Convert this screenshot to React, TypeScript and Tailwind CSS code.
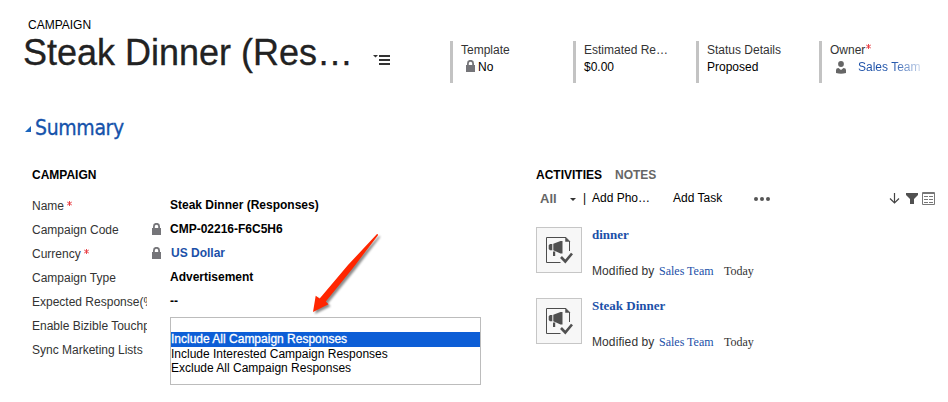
import type { ReactNode } from "react";

const LockIcon = ({ className = "" }: { className?: string }) => (
  <svg className={`h-3 w-[9px] shrink-0 ${className}`} viewBox="0 0 9 12" fill="none">
    <path d="M1.900 6V3.400a2.600 2.600 0 0 1 5.200 0V6" stroke="#757579" strokeWidth="1.800" />
    <path d="M0 5h9v7H0z" fill="#757579" />
  </svg>
);

const Required = ({ className = "" }: { className?: string }) => (
  <svg className={`h-[5px] w-[5px] shrink-0 ${className}`} viewBox="0 0 5 5" stroke="#e8353b" strokeWidth="0.9">
    <path d="M2.5 0v5M0.2 1l4.6 3M4.8 1L0.2 4" />
  </svg>
);

const HeaderField = ({ label, children }: { label: ReactNode; children: ReactNode }) => (
  <div className="h-[42px] w-[123px] shrink-0 border-l-3 border-[#c3c3c3] pl-[8px]">
    <div className="flex h-[17px] items-center text-[#333]">{label}</div>
    <div className="flex h-[17px] items-center text-black">{children}</div>
  </div>
);

const Label = ({ text, required, locked }: { text: string; required?: boolean; locked?: boolean }) => (
  <div className="flex h-6 w-[138px] items-center">
    <div className="flex w-[115px] shrink-0 items-center overflow-hidden whitespace-nowrap text-[#333]">
      {text}
      {required && <Required className="-mt-[5px] ml-[3px]" />}
    </div>
    {locked && <LockIcon className="-mt-[3px] ml-[5px]" />}
  </div>
);

const Activity = ({ title }: { title: string }) => (
  <div className="flex h-[71px]">
    <div className="h-[46px] w-[46px] shrink-0 border border-[#c6c6c6] bg-[#f7f7f7]">
      <svg className="h-[44px] w-[44px]" viewBox="0 0 44 44" fill="none">
        <path d="M23.500 34.500H9.500V9.500H29M32.500 13V23" stroke="#4c4c4c" />
        <path d="M28.500 9l4.500 4.500h-4.500z" fill="#505050" stroke="#505050" strokeWidth="0.500" />
        <path d="M16.300 15.800L23.500 13h2v12.500h-2l-7.200-3.200zM15.300 16v6.200h-2.300l-1.300-1.200v-3.800L13 16zM16 23.500h2.200v4.500H16z" fill="#505050" />
        <path d="M24 29l4.300 4.500 6.700-8" stroke="#505050" strokeWidth="2.600" />
      </svg>
    </div>
    <div className="ml-[10px] whitespace-nowrap">
      <div className="-mt-px h-[17px] font-['Liberation_Serif',serif] text-[13px] leading-[17px] font-bold text-[#1b50a8]">{title}</div>
      <div className="mt-[20px] flex h-[16px] items-center text-[#333]">
        <span className="w-[67px] tracking-[0.1px]">Modified by</span>
        <span className="w-[65px] font-['Liberation_Serif',serif] text-[#1b50a8]">Sales Team</span>
        <span className="font-['Liberation_Serif',serif]">Today</span>
      </div>
    </div>
  </div>
);

export default function App() {
  return (
    <div className="relative h-[402px] w-[948px] overflow-hidden bg-white font-['Liberation_Sans',Arial,sans-serif] text-[12px] leading-[16px] text-black">
      <header className="flex h-[112px]">
        <div className="w-[450px] shrink-0 pt-[17px] whitespace-nowrap">
          <div className="pl-[28px]">CAMPAIGN</div>
          <div className="flex h-[40px] items-center pl-[23px]">
            <h1 className="w-[349px] text-[36px] leading-[40px] text-[#222] [-webkit-text-stroke:0.3px_#222]">Steak Dinner (Res…</h1>
            <svg className="mt-[14px] h-[12px] w-[18px]" viewBox="0 0 18 12" fill="#333">
              <path d="M1 1h5L3.500 3.500zM7 1h11v2H7zM7 5h11v2H7zM7 9h11v2H7z" />
            </svg>
          </div>
        </div>
        <div className="flex pt-[41px]">
          <HeaderField label="Template"><LockIcon className="-mt-px mr-[3px] ml-[5px]" />No</HeaderField>
          <HeaderField label="Estimated Re…">$0.00</HeaderField>
          <HeaderField label="Status Details">Proposed</HeaderField>
          <HeaderField label={<>Owner<Required className="-mt-[6px] ml-px" /></>}>
            <svg className="mt-[2px] ml-[6px] h-[13px] w-[10px]" viewBox="0 0 10 13" fill="#666">
              <circle cx="5" cy="3" r="2.900" />
              <path d="M0 12V9q0-2 2.500-2L5 9l2.500-2Q10 7 10 9v3q-5 1.500-10 0z" />
            </svg>
            <span className="ml-[12px] bg-linear-to-r from-[#1b50a8] from-55% to-[#c8d5ea] bg-clip-text text-transparent">Sales Team</span>
          </HeaderField>
        </div>
      </header>

      <div className="flex h-[30px] items-center pl-[25px]">
        <svg className="mt-[4px] h-[6px] w-[6px]" viewBox="0 0 6 6" fill="#1b65bd"><path d="M6 0v6H0z" /></svg>
        <h2 className="mt-[2px] ml-[4px] font-['DejaVu_Sans_Condensed','DejaVu_Sans',sans-serif] text-[21px] leading-[30px] tracking-[-0.35px] text-[#1653ab] [-webkit-text-stroke:0.3px_#1653ab]">Summary</h2>
      </div>

      <main className="flex pt-[25px] pl-[32px]">
        <section className="w-[504px] shrink-0">
          <h3 className="h-[16px] font-bold">CAMPAIGN</h3>
          <div className="flex pt-[10px]">
            <div className="w-[138px] pt-px">
              <Label text="Name" required />
              <Label text="Campaign Code" locked />
              <Label text="Currency" required locked />
              <Label text="Campaign Type" />
              <Label text="Expected Response(%)" />
              <Label text="Enable Bizible Touchpoints" />
              <Label text="Sync Marketing Lists" />
            </div>
            <div className="w-[311px] font-bold">
              <div className="h-6 leading-6">Steak Dinner (Responses)</div>
              <div className="h-6 leading-6">CMP-02216-F6C5H6</div>
              <div className="h-6 pl-px leading-6 text-[#1b50a8]">US Dollar</div>
              <div className="h-6 leading-6">Advertisement</div>
              <div className="h-6 leading-6">--</div>
              <div className="mt-[4px] h-[68px] border border-[#bcbcbc] pt-[14px] leading-[14px] font-normal">
                <div className="h-[15px] bg-[#0d5ed6] leading-[15px] text-white [-webkit-text-stroke:0.3px_white]">Include All Campaign Responses</div>
                <div className="h-[14px]">Include Interested Campaign Responses</div>
                <div className="h-[14px]">Exclude All Campaign Responses</div>
              </div>
            </div>
          </div>
        </section>

        <section className="w-[412px]">
          <div className="flex h-[16px] font-bold">
            <span className="w-[79px]">ACTIVITIES</span>
            <span className="text-[#666]">NOTES</span>
          </div>
          <div className="flex h-[44px] items-start pt-[7px] whitespace-nowrap">
            <span className="mt-px ml-[4px] w-[30px] text-[13px] font-bold text-[#666]">All</span>
            <svg className="mt-[8px] h-[3px] w-[6px]" viewBox="0 0 6 3" fill="#333"><path d="M0 0h6L3 3z" /></svg>
            <span className="ml-[7px] w-[9px]">|</span>
            <span className="w-[81px]">Add Pho…</span>
            <span className="w-[81px]">Add Task</span>
            <svg className="mt-[7px] h-[4px] w-[16px]" viewBox="0 0 16 4" fill="#555"><circle cx="2" cy="2" r="2" /><circle cx="8" cy="2" r="2" /><circle cx="14" cy="2" r="2" /></svg>
            <svg className="mt-[2px] ml-[119px] h-[13px] w-[46px]" viewBox="0 0 46 13" fill="none">
              <path d="M5.500 1v10M1 6.500l4.500 4.500L10 6.500" stroke="#444" strokeWidth="1.200" />
              <path d="M17 1h12v2l-4 4v5h-4V7l-4-4z" fill="#505050" />
              <path d="M33.500 0.500h12v12h-12zM33 1.500h13" stroke="#777" />
              <path d="M35 4.500h4M40 4.500h4M35 7.500h4M40 7.500h4M35 10.500h4M40 10.500h4" stroke="#777" />
            </svg>
          </div>
          <Activity title="dinner" />
          <Activity title="Steak Dinner" />
        </section>
      </main>

      <svg className="pointer-events-none absolute top-[230px] left-[308px] h-[88px] w-[76px] drop-shadow-[2px_2px_1px_rgba(0,0,0,0.45)]" viewBox="0 0 76 88">
        <path d="M69 4q1.500 0 .8 1.500L45 38L17.800 71.500L20.500 74.300L5 82L7.700 65.700L11.700 68.500L40 35Z" fill="#ff2600" />
      </svg>
    </div>
  );
}
